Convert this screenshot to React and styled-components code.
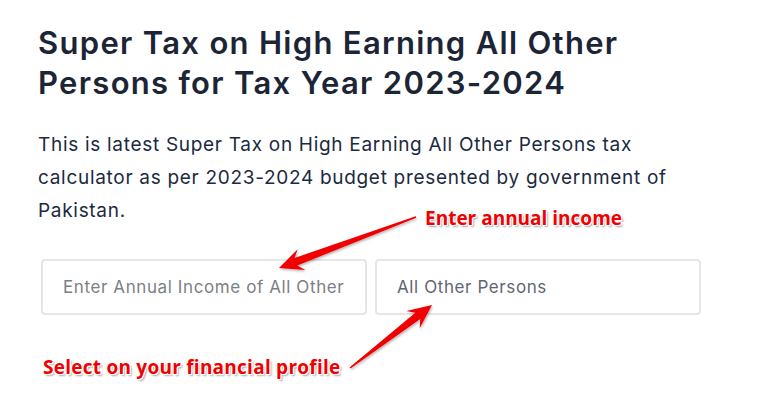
import React from "react"
import styled, { createGlobalStyle } from "styled-components"

const Global = createGlobalStyle`
  html, body {
    margin: 0;
    padding: 0;
    background: #fff;
  }
`

const Page = styled.div`
  position: relative;
  width: 757px;
  height: 420px;
  box-sizing: border-box;
  padding: 23px 38px 0 38px;
  font-family: "Inter", "Open Sans", sans-serif;
  overflow: hidden;
`

const Title = styled.h1`
  margin: 0;
  font-size: 31px;
  line-height: 40px;
  font-weight: 600;
  color: #1c2536;
  letter-spacing: 1.3px;
`

const Lead = styled.p`
  margin: 25px 0 0 0;
  font-size: 19px;
  line-height: 33px;
  font-weight: 400;
  color: #1b2a40;
  letter-spacing: 0.7px;
  width: 660px;
`

const FormRow = styled.div`
  display: grid;
  grid-template-columns: 326px 326px;
  gap: 8px;
  margin: 32px 0 0 3px;
`

const Field = styled.div`
  box-sizing: border-box;
  height: 56px;
  border: 2px solid #e6e6e6;
  border-radius: 4px;
  display: flex;
  align-items: center;
  padding: 0 20px;
  font-size: 17px;
  letter-spacing: 0.6px;
  color: ${(p) => (p.$select ? "#5f6672" : "#7b7f86")};
  white-space: nowrap;
  overflow: hidden;
`

const Note = styled.div`
  position: absolute;
  left: ${(p) => p.$x}px;
  top: ${(p) => p.$y}px;
  font-family: "Open Sans", "Liberation Sans", sans-serif;
  font-weight: 700;
  font-size: 19px;
  line-height: 22px;
  letter-spacing: ${(p) => p.$spacing || 0}px;
  color: #f00000;
  white-space: nowrap;
  text-shadow:
    -1px -1px 0 #fff, 1px -1px 0 #fff, -1px 1px 0 #fff, 1px 1px 0 #fff,
    2px 2px 2px rgba(0, 0, 0, 0.35);
`

const Overlay = styled.svg`
  position: absolute;
  left: 0;
  top: 0;
  pointer-events: none;
`

function arrowPoints(tail, tip, headLen, headHalf, tailHalf, neckHalf) {
  const dx = tip[0] - tail[0]
  const dy = tip[1] - tail[1]
  const len = Math.hypot(dx, dy)
  const ux = dx / len
  const uy = dy / len
  const nx = -uy
  const ny = ux
  const bx = tip[0] - ux * headLen
  const by = tip[1] - uy * headLen
  const inset = headLen * 0.25
  const cx = bx + ux * inset
  const cy = by + uy * inset
  const pts = [
    [tail[0] + nx * tailHalf, tail[1] + ny * tailHalf],
    [cx + nx * neckHalf, cy + ny * neckHalf],
    [bx + nx * headHalf, by + ny * headHalf],
    tip,
    [bx - nx * headHalf, by - ny * headHalf],
    [cx - nx * neckHalf, cy - ny * neckHalf],
    [tail[0] - nx * tailHalf, tail[1] - ny * tailHalf],
  ]
  return pts.map((p) => p.map((v) => v.toFixed(1)).join(",")).join(" ")
}

const arrows = [
  { tail: [416, 217], tip: [279, 268] },
  { tail: [350, 368], tip: [432, 305] },
]

export default function App() {
  return (
    <>
      <Global />
      <Page>
        <Title>
          Super Tax on High Earning All Other
          <br />
          Persons for Tax Year 2023-2024
        </Title>
        <Lead>
          This is latest Super Tax on High Earning All Other Persons tax
          calculator as per 2023-2024 budget presented by government of
          Pakistan.
        </Lead>
        <FormRow>
          <Field>Enter Annual Income of All Other</Field>
          <Field $select>All Other Persons</Field>
        </FormRow>

        <Overlay width="757" height="420" viewBox="0 0 757 420">
          <defs>
            <filter id="shade" x="-20%" y="-20%" width="140%" height="140%">
              <feDropShadow dx="1" dy="1.5" stdDeviation="1" floodColor="#000" floodOpacity="0.3" />
            </filter>
          </defs>
          {arrows.map((a, i) => (
            <polygon
              key={i}
              points={arrowPoints(a.tail, a.tip, 24, 11, 0.8, 4)}
              fill="#f00000"
              filter="url(#shade)"
            />
          ))}
        </Overlay>
        <Note $x={425} $y={207}>Enter annual income</Note>
        <Note $x={43} $y={356} $spacing={0.25}>Select on your financial profile</Note>
      </Page>
    </>
  )
}
